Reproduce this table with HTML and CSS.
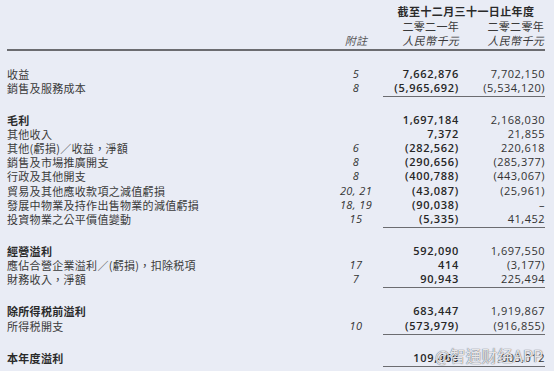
FILE: index.html
```html
<!DOCTYPE html>
<html lang="zh-Hant">
<head>
<meta charset="utf-8">
<link rel="stylesheet" href="styles.css">
</head>
<body>
<div class="page">
  <div class="head">
    <div class="row"><span></span><span></span><span class="span2 bold">截至十二月三十一日止年度</span></div>
    <div class="row"><span></span><span></span><span class="num-h">二零二一年</span><span class="num-h">二零二零年</span></div>
    <div class="row"><span></span><span class="note-h">附註</span><span class="num-h it">人民幣千元</span><span class="num-h it">人民幣千元</span></div>
  </div>

  <div class="group">
    <div class="row"><span class="lbl">收益</span><span class="note">5</span><span class="n b">7,662,876</span><span class="n">7,702,150</span></div>
    <div class="row ruled"><span class="lbl">銷售及服務成本</span><span class="note">8</span><span class="n b">(5,965,692)</span><span class="n">(5,534,120)</span></div>
  </div>

  <div class="group">
    <div class="row"><span class="lbl bold">毛利</span><span class="note"></span><span class="n b">1,697,184</span><span class="n">2,168,030</span></div>
    <div class="row"><span class="lbl">其他收入</span><span class="note"></span><span class="n b">7,372</span><span class="n">21,855</span></div>
    <div class="row"><span class="lbl">其他(虧損)／收益，淨額</span><span class="note">6</span><span class="n b">(282,562)</span><span class="n">220,618</span></div>
    <div class="row"><span class="lbl">銷售及市場推廣開支</span><span class="note">8</span><span class="n b">(290,656)</span><span class="n">(285,377)</span></div>
    <div class="row"><span class="lbl">行政及其他開支</span><span class="note">8</span><span class="n b">(400,788)</span><span class="n">(443,067)</span></div>
    <div class="row"><span class="lbl">貿易及其他應收款項之減值虧損</span><span class="note">20, 21</span><span class="n b">(43,087)</span><span class="n">(25,961)</span></div>
    <div class="row"><span class="lbl">發展中物業及持作出售物業的減值虧損</span><span class="note">18, 19</span><span class="n b">(90,038)</span><span class="n">–</span></div>
    <div class="row ruled"><span class="lbl">投資物業之公平價值變動</span><span class="note">15</span><span class="n b">(5,335)</span><span class="n">41,452</span></div>
  </div>

  <div class="group">
    <div class="row"><span class="lbl bold">經營溢利</span><span class="note"></span><span class="n b">592,090</span><span class="n">1,697,550</span></div>
    <div class="row"><span class="lbl">應佔合營企業溢利／(虧損)，扣除税項</span><span class="note">17</span><span class="n b">414</span><span class="n">(3,177)</span></div>
    <div class="row ruled"><span class="lbl">財務收入，淨額</span><span class="note">7</span><span class="n b">90,943</span><span class="n">225,494</span></div>
  </div>

  <div class="group">
    <div class="row"><span class="lbl bold">除所得税前溢利</span><span class="note"></span><span class="n b">683,447</span><span class="n">1,919,867</span></div>
    <div class="row ruled"><span class="lbl">所得税開支</span><span class="note">10</span><span class="n b">(573,979)</span><span class="n">(916,855)</span></div>
  </div>

  <div class="group">
    <div class="row ruled"><span class="lbl bold">本年度溢利</span><span class="note"></span><span class="n b">109,468</span><span class="n">1,003,012</span></div>
  </div>

  <div class="watermark">@智通财经APP</div>
</div>
</body>
</html>
```

FILE: styles.css
```css
html, body {
  margin: 0;
  padding: 0;
  background: #e9ecf5;
}

body {
  width: 554px;
  height: 371px;
  overflow: hidden;
  font-family: "Noto Sans CJK TC", "Noto Sans", sans-serif;
  color: #3a3a3a;
}

.page {
  position: relative;
  box-sizing: border-box;
  width: 554px;
  height: 371px;
  padding: 4px 9px 0 7px;
  overflow: hidden;
}

.row {
  display: grid;
  grid-template-columns: 322px 54px 77px 85px;
  height: 14.2px;
  line-height: 14.2px;
  font-size: 11px;
  letter-spacing: 0.3px;
}

.head {
  border-bottom: 2px solid #6b6c70;
  padding-bottom: 1px;
}

.head .row {
  height: 14.5px;
  line-height: 14.5px;
}

.span2 {
  grid-column: 3 / span 2;
  text-align: center;
  color: #2a2a2a;
  letter-spacing: 0.4px;
  padding-left: 4px;
}

.bold { font-weight: 700; color: #2a2a2a; }

.num-h {
  text-align: right;
  color: #3a3a3a;
  padding-right: 1px;
}

.note-h {
  text-align: center;
  font-style: italic;
  color: #555;
}

.it { font-style: italic; }

.group {
  margin-top: 16px;
}

.lbl {
  white-space: nowrap;
}

.note {
  text-align: center;
  font-family: "Open Sans", "Noto Sans", sans-serif;
  font-style: italic;
  letter-spacing: 0.4px;
  color: #333;
}

.n {
  text-align: right;
  font-family: "Open Sans", "Noto Sans", sans-serif;
  letter-spacing: 0.5px;
  color: #333;
}

.n.b {
  font-weight: 600;
  letter-spacing: 0.7px;
  color: #262626;
  padding-right: 1px;
}

.row.ruled {
  height: 16px;
}

.row.ruled .n {
  border-bottom: 1.5px solid #6b6c70;
}

.watermark {
  position: absolute;
  left: 435px;
  top: 345px;
  white-space: nowrap;
  font-family: "Noto Sans CJK SC", sans-serif;
  font-size: 15.5px;
  line-height: 20px;
  letter-spacing: 0.3px;
  color: rgba(255, 255, 255, 0.85);
  text-shadow: 0 0 1px rgba(80, 80, 90, 0.9), 0 0 1px rgba(80, 80, 90, 0.6);
}
```
